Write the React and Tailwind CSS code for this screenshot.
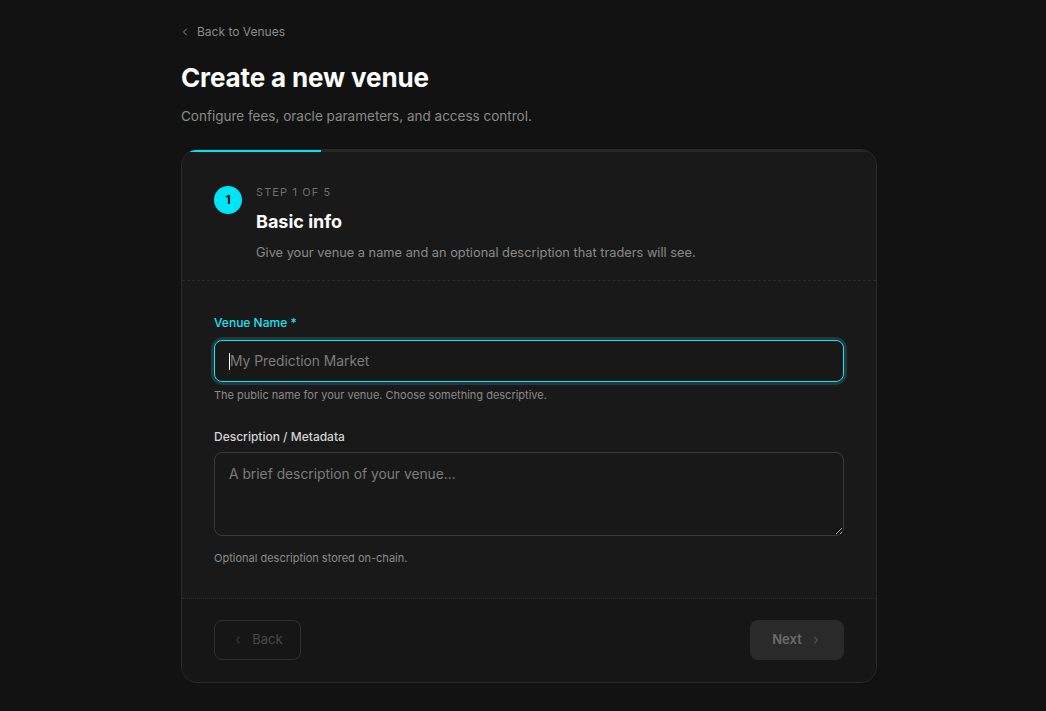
import React from "react";

const ChevronLeft = ({ className }) => (
  <svg viewBox="0 0 24 24" fill="none" stroke="currentColor" strokeWidth="2" strokeLinecap="round" strokeLinejoin="round" className={className}>
    <path d="m15 18-6-6 6-6" />
  </svg>
);
const ChevronRight = ({ className }) => (
  <svg viewBox="0 0 24 24" fill="none" stroke="currentColor" strokeWidth="2" strokeLinecap="round" strokeLinejoin="round" className={className}>
    <path d="m9 18 6-6-6-6" />
  </svg>
);

export default function App() {
  return (
    <div className="min-h-[711px] bg-[#121212] text-white" style={{ fontFamily: "Inter, 'Noto Sans', sans-serif" }}>
      <div className="pl-[181px] pt-[24px] pb-[29px]">
        <div className="w-[696px]">
          <a className="flex items-center gap-[6px] text-[12px] leading-[16px] text-[#8a8a8a]">
            <ChevronLeft className="w-[12px] h-[12px] -ml-[2px]" />
            <span>Back to Venues</span>
          </a>
          <h1 className="mt-[22px] text-[26px] leading-[32px] font-bold tracking-[-0.005em] text-white">Create a new venue</h1>
          <p className="mt-[12px] text-[13.5px] leading-[20px] text-[#8a8a8a]">Configure fees, oracle parameters, and access control.</p>

          <div className="mt-[23px] rounded-[16px] border border-[#2a2a2a] bg-[#191919] overflow-hidden">
            <div className="h-[3px] bg-[#262626] -mt-px">
              <div className="h-full bg-[#00e5f5]" style={{ width: "20%" }} />
            </div>
            <div className="flex gap-[14px] px-[32px] pt-[33px] pb-[18px] border-b border-dashed border-[#2a2a2a]">
              <div className="mt-[1px] w-[28px] h-[28px] shrink-0 rounded-full bg-[#00e5f5] flex items-center justify-center text-[12px] font-bold text-black">1</div>
              <div>
                <div className="text-[11px] leading-[14px] tracking-[0.1em] uppercase text-[#6e6e6e]">Step 1 of 5</div>
                <div className="mt-[12px] text-[18px] leading-[22px] font-bold text-white">Basic info</div>
                <div className="mt-[11px] text-[12.8px] leading-[18px] text-[#8a8a8a]">Give your venue a name and an optional description that traders will see.</div>
              </div>
            </div>

            <div className="px-[32px] pt-[34px] pb-[33px]">
              <label className="block text-[12px] leading-[16px] font-medium text-[#1fe0f0]">Venue Name *</label>
              <div className="mt-[9px] rounded-[9px] shadow-[0_0_0_3px_#1b3c40]">
                <div className="h-[42px] rounded-[8px] border border-[#1fe0f0] bg-[#181818] flex items-center px-[14px]">
                  <span className="w-px h-[17px] bg-white" />
                  <span className="text-[13.8px] text-[#7c7c7c]">My Prediction Market</span>
                </div>
              </div>
              <p className="mt-[6px] text-[11px] leading-[14px] text-[#8a8a8a]">The public name for your venue. Choose something descriptive.</p>

              <label className="block mt-[27px] text-[12px] leading-[16px] font-medium text-[#d4d4d4]">Description / Metadata</label>
              <textarea
                readOnly
                placeholder="A brief description of your venue..."
                className="mt-[7px] block w-full h-[84px] rounded-[8px] border border-[#3a3a3a] bg-[#181818] px-[14px] py-[11px] text-[13.8px] leading-[20px] text-white placeholder:text-[#7c7c7c] outline-none"
              />
              <p className="mt-[15px] text-[11px] leading-[14px] text-[#8a8a8a]">Optional description stored on-chain.</p>
            </div>

            <div className="flex items-center justify-between px-[32px] pt-[21px] pb-[22px] border-t border-dotted border-[#2e2e2e] bg-[#161616]">
              <button disabled className="h-[40px] w-[87px] rounded-[8px] border border-[#2e2e2e] flex items-center justify-center gap-[8px] text-[13px] text-[#4a4a4a]">
                <ChevronLeft className="w-[12px] h-[12px]" />
                <span>Back</span>
              </button>
              <button disabled className="h-[40px] w-[94px] rounded-[8px] bg-[#2a2a2a] flex items-center justify-center gap-[8px] text-[13px] font-semibold text-[#6a6a6a]">
                <span>Next</span>
                <ChevronRight className="w-[12px] h-[12px]" />
              </button>
            </div>
          </div>
        </div>
      </div>
    </div>
  );
}
